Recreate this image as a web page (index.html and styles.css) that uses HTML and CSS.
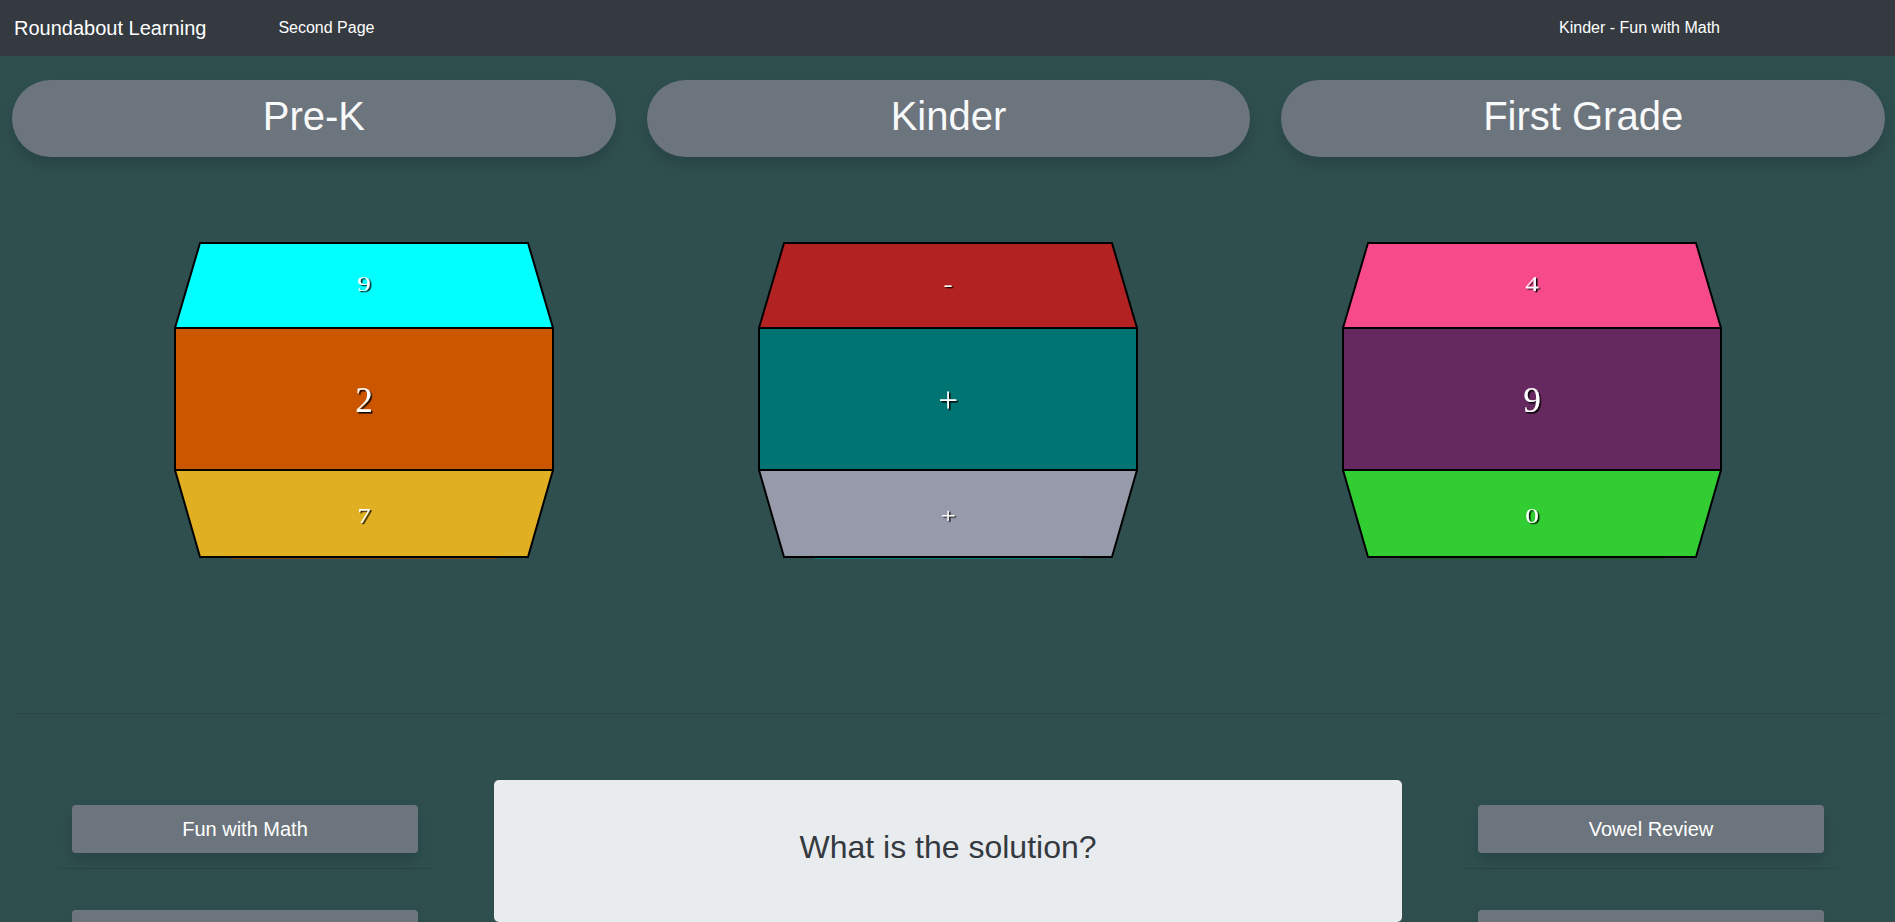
FILE: index.html
```html
<!DOCTYPE html>
<html lang="en">
<head>
    <meta charset="UTF-8">
    <meta name="viewport" content="width=device-width, initial-scale=1.0">
    <title>Kinder - Fun with Math</title>
    <link rel="stylesheet" href="styles.css">
</head>
<body>

    <nav class="navbar">
        <a class="brand" href="#">Roundabout Learning</a>
        <a class="nav-link" href="#">Second Page</a>
        <span class="nav-title">Kinder - Fun with Math</span>
    </nav>

    <!-- shared shadow for the drum numbers -->
    <svg class="defs" width="0" height="0" aria-hidden="true">
        <defs>
            <filter id="numShadow" x="-50%" y="-50%" width="200%" height="200%">
                <feDropShadow dx="1.6" dy="1.6" stdDeviation="0.7" flood-color="#000" flood-opacity="0.9"/>
            </filter>
        </defs>
    </svg>

    <section class="grades">
        <button class="grade-pill">Pre-K</button>
        <button class="grade-pill">Kinder</button>
        <button class="grade-pill">First Grade</button>
    </section>

    <section class="drums">
        <!-- Pre-K drum -->
        <svg class="drum" width="380" height="318" viewBox="0 0 380 318">
            <rect x="57" y="315" width="266" height="2" fill="#7a4a1a"/>
            <polygon class="face" points="26,1 354,1 379,86 1,86" fill="#00ffff"/>
            <rect class="face" x="1" y="86" width="378" height="142" fill="#cc5500"/>
            <polygon class="face" points="1,228 379,228 354,315 26,315" fill="#e1af22"/>
            <text class="num num-side" transform="translate(190 42) scale(1 0.78)">9</text>
            <text class="num num-main" transform="translate(190 158)">2</text>
            <text class="num num-side" transform="translate(190 274) scale(1 0.78)">7</text>
        </svg>

        <!-- Kinder drum -->
        <svg class="drum" width="380" height="318" viewBox="0 0 380 318">
            <rect x="57" y="315" width="266" height="2" fill="#0a8080"/>
            <polygon class="face" points="26,1 354,1 379,86 1,86" fill="#b22222"/>
            <rect class="face" x="1" y="86" width="378" height="142" fill="#007472"/>
            <polygon class="face" points="1,228 379,228 354,315 26,315" fill="#979aaa"/>
            <text class="num num-side" transform="translate(190 42) scale(1 0.78)">-</text>
            <text class="num num-main" transform="translate(190 158)">+</text>
            <text class="num num-side" transform="translate(190 274) scale(1 0.78)">+</text>
        </svg>

        <!-- First Grade drum -->
        <svg class="drum" width="380" height="318" viewBox="0 0 380 318">
            <rect x="57" y="315" width="266" height="2" fill="#1e5a1e"/>
            <polygon class="face" points="26,1 354,1 379,86 1,86" fill="#f64a8a"/>
            <rect class="face" x="1" y="86" width="378" height="142" fill="#65295f"/>
            <polygon class="face" points="1,228 379,228 354,315 26,315" fill="#32cd32"/>
            <text class="num num-side" transform="translate(190 42) scale(1 0.78)">4</text>
            <text class="num num-main" transform="translate(190 158)">9</text>
            <text class="num num-side" transform="translate(190 274) scale(1 0.78)">0</text>
        </svg>
    </section>

    <hr class="divider">

    <section class="lessons">
        <div class="side-col">
            <button class="lesson-button">Fun with Math</button>
            <hr>
            <button class="lesson-button" aria-label="More math lessons"></button>
        </div>

        <div class="question-box">
            <h2>What is the solution?</h2>
        </div>

        <div class="side-col">
            <button class="lesson-button">Vowel Review</button>
            <hr>
            <button class="lesson-button" aria-label="More reading lessons"></button>
        </div>
    </section>

</body>
</html>
```

FILE: styles.css
```css
/* General page styling */
html, body {
    margin: 0;
    padding: 0;
    font-family: 'Liberation Sans', Arial, sans-serif;
    background-color: #2f4f4f;
    color: #fff;
    overflow: hidden;
}

/* Top navigation bar */
.navbar {
    display: flex;
    align-items: center;
    height: 56px;
    padding: 0 0 0 14px;
    box-sizing: border-box;
    background-color: #343a40;
}

.navbar a {
    color: #fff;
    text-decoration: none;
}

.brand {
    font-size: 20px;
}

.nav-link {
    font-size: 16px;
    margin-left: 72px;
}

.nav-title {
    font-size: 16px;
    margin-left: auto;
    margin-right: 175px;
}

.defs {
    position: absolute;
}

/* Grade selector pills */
.grades {
    display: grid;
    grid-template-columns: repeat(3, 1fr);
    gap: 31px;
    padding: 24px 10px 0 12px;
}

.grade-pill {
    height: 77px;
    border: none;
    border-radius: 40px;
    background-color: #6c757d;
    color: #f8f9fa;
    font-family: 'Liberation Sans', Arial, sans-serif;
    font-size: 40px;
    padding: 0 0 4px;
    box-shadow: 0 8px 16px rgba(0, 0, 0, 0.15);
    cursor: pointer;
}

/* Spinning number drums */
.drums {
    display: flex;
    justify-content: center;
    gap: 204px;
    margin-top: 85px;
}

.drum {
    display: block;
    overflow: visible;
}

.drum .face {
    stroke: #000;
    stroke-width: 2;
    stroke-linejoin: round;
}

.num {
    fill: #fff;
    font-family: 'Liberation Serif', 'Times New Roman', serif;
    text-anchor: middle;
    dominant-baseline: central;
    filter: url(#numShadow);
}

.num-side {
    font-size: 27px;
}

.num-main {
    font-size: 35px;
}

/* Divider between drums and lessons */
.divider {
    border: none;
    border-top: 1px solid rgba(0, 0, 0, 0.1);
    margin: 153px 9px 0 13px;
}

/* Lesson area */
.lessons {
    display: grid;
    grid-template-columns: 376px 908px 376px;
    column-gap: 61px;
    padding-left: 57px;
    margin-top: 66px;
}

.side-col {
    display: flex;
    flex-direction: column;
}

.side-col hr {
    width: 100%;
    border: none;
    border-top: 1px solid rgba(0, 0, 0, 0.1);
    margin: 15px 0 16px;
}

.lesson-button {
    margin: 25px 15px 0;
    height: 48px;
    border: none;
    border-radius: 4px;
    background-color: #6c757d;
    color: #fff;
    font-family: 'Liberation Sans', Arial, sans-serif;
    font-size: 20px;
    box-shadow: 0 8px 16px rgba(0, 0, 0, 0.15);
    cursor: pointer;
}

.question-box {
    height: 142px;
    box-sizing: border-box;
    padding-top: 48px;
    background-color: #e9ecef;
    border-radius: 5px;
    text-align: center;
}

.question-box h2 {
    margin: 0;
    font-size: 32px;
    font-weight: normal;
    line-height: 1.2;
    color: #343a40;
}
```
